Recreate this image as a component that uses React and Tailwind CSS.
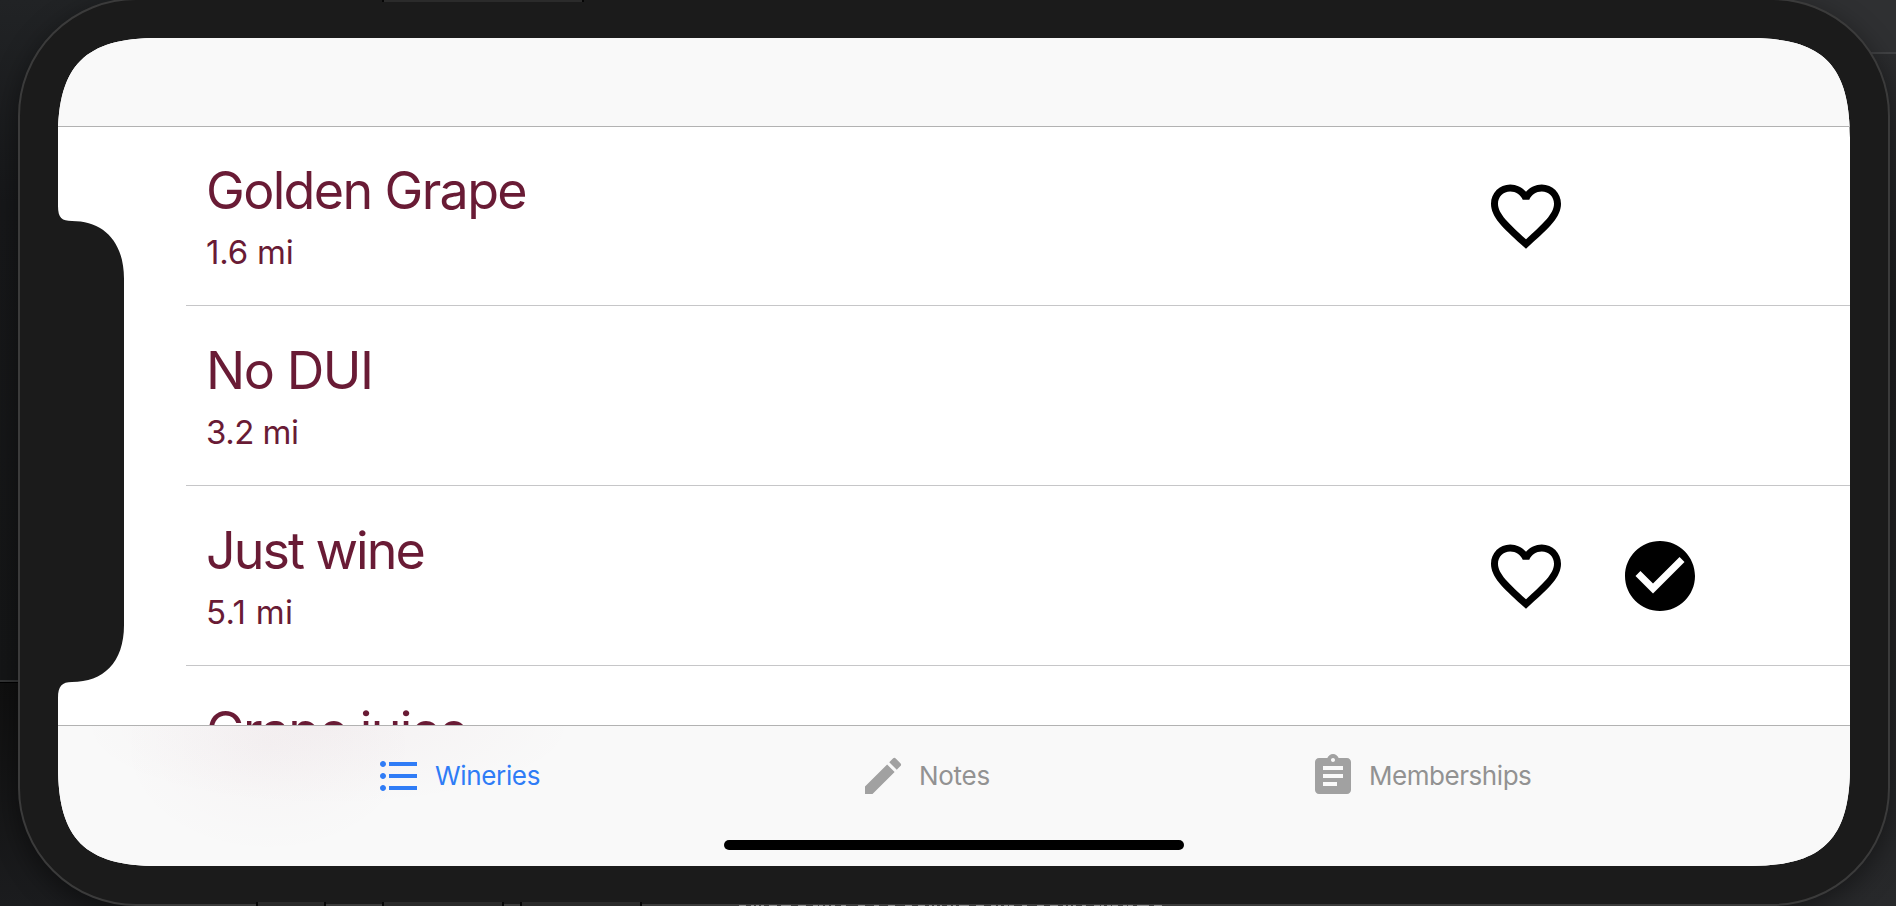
import { MdFormatListBulleted, MdEdit, MdAssignment, MdFavoriteBorder, MdCheckCircle } from "react-icons/md";

const rows = [
  { name: "Golden Grape", miles: "1.6 mi", liked: true, visited: false, nameTracking: "tracking-[-1.65px]", milesTracking: "tracking-[-0.2px]" },
  { name: "No DUI", miles: "3.2 mi", liked: false, visited: false, nameTracking: "tracking-[-1.45px]", milesTracking: "tracking-[-0.5px]" },
  { name: "Just wine", miles: "5.1 mi", liked: true, visited: true, nameTracking: "tracking-[-2px]", milesTracking: "tracking-[0.3px]" },
  { name: "Grape juice", liked: false, visited: false, nameTracking: "tracking-[-1.75px]", milesTracking: "" },
];

function WineryRow({ row }) {
  return (
    <div className="ml-32 flex h-[180px] shrink-0 justify-between border-b border-[#c6c6c8] pr-[148px] pl-5">
      <div className="flex flex-col pt-[33px] text-[#691b35]">
        <span className={`text-[52px] leading-[64px] whitespace-nowrap ${row.nameTracking}`}>{row.name}</span>
        {row.miles && (
          <span className={`mt-[9px] text-[33px] leading-[40px] whitespace-nowrap ${row.milesTracking}`}>{row.miles}</span>
        )}
      </div>
      <div className="flex items-center gap-[50px] text-[84px] text-black">
        {row.liked && <MdFavoriteBorder />}
        {row.visited ? <MdCheckCircle /> : <span className="w-[84px]" />}
      </div>
    </div>
  );
}

function Tab({ icon: Icon, label, className, iconClass, textClass }) {
  return (
    <div className={`flex items-center gap-3 ${className}`}>
      <Icon className={`size-12 ${iconClass}`} />
      <span className={`text-[26px] leading-8 ${textClass}`}>{label}</span>
    </div>
  );
}

/* Windows behind the phone: hairlines and the edges that peek past the bezel. */
function Backdrop() {
  return (
    <>
      <div className="absolute top-0 left-0 h-[682px] w-40 border-b-2 border-[#333435] bg-linear-to-b from-[#212325] via-[#17181a] via-30% to-[#151617]" />
      <div className="absolute top-[682px] left-0 h-[224px] w-40 border-t border-black bg-linear-to-b from-[#101010] to-[#1b1c1e]" />
      <div className="absolute top-0 right-0 h-[54px] w-40 border-b-2 border-[#414244] bg-[#2f3032]" />
      <div className="absolute top-[54px] right-0 h-[852px] w-40 bg-linear-to-b from-[#2b2c2e] via-[#1d1e20] via-30% to-[#28292b]" />
    </>
  );
}

function EdgeMarks() {
  return (
    <svg className="absolute inset-0" width="1896" height="906" shapeRendering="crispEdges">
      <path fill="#2b2b2b" d="M382 0h202v2h-202zM256 902h70v4h-70zM382 902h122v4h-122zM520 902h122v4h-122z" />
      <path fill="#060606" d="M382 0h2v2h-2zM582 0h2v2h-2zM256 902h2v4h-2zM324 902h2v4h-2zM382 902h2v4h-2zM502 902h2v4h-2zM520 902h2v4h-2zM640 902h2v4h-2z" />
      <path stroke="#8e8e8e" strokeWidth="1" d="M739 905.5h7m5 0h3m2 0h3m2 0h3m5 0h8m4 0h10m7 0h8m7 0h5m1 0h4m2 0h4m2 0h4m6 0h5m12 0h7m9 0h5m9 0h7m10 0h7m6 0h7m4 0h3m2 0h3m3 0h2m5 0h4m2 0h3m3 0h10m7 0h8m7 0h5m2 0h3m3 0h4m1 0h5m8 0h5m10 0h7m6 0h8m5 0h3m2 0h3m2 0h3m6 0h4m8 0h6m1 0h3m3 0h4m1 0h6m5 0h4m1 0h5m4 0h12m5 0h8" />
    </svg>
  );
}

export default function App() {
  return (
    <div className="relative h-[906px] w-[1896px] overflow-hidden bg-[#202123] font-['Inter',sans-serif]">
      <Backdrop />
      <div className="absolute top-[-2px] left-[18px] h-[908px] w-[1872px] rounded-[118px] border-2 border-[#3b3b3b] bg-[#1b1b1b] shadow-[0_8px_28px_rgba(0,0,0,0.45)]" />
      <EdgeMarks />
      <div className="relative mt-[38px] ml-[58px] flex h-[828px] w-[1792px] flex-col overflow-hidden bg-white [clip-path:path('M100_0H1692C1765_0_1792_27_1792_100V728C1792_801_1765_828_1692_828H100C27_828_0_801_0_728V660C0_648_4_644_14_644C45_644_66_625_66_587V241C66_203_45_183_14_183C4_183_0_180_0_168V100C0_27_27_0_100_0Z')]">
        <header className="h-[89px] shrink-0 border-b border-[#b2b2b2] bg-[#f9f9f9]" />
        <main className="-mt-px flex h-[599px] shrink-0 flex-col overflow-hidden">
          {rows.map((r) => <WineryRow key={r.name} row={r} />)}
        </main>
        <footer className="flex h-[141px] shrink-0 flex-col items-center border-t border-[#b2b2b2] bg-[#f9f9f9] bg-[radial-gradient(ellipse_250px_80px_at_270px_0px,rgba(120,30,60,0.035),transparent),radial-gradient(ellipse_150px_110px_at_210px_20px,rgba(120,30,60,0.025),transparent)]">
          <nav className="flex h-[100px] w-full pl-[317px] text-[#929292]">
            <Tab icon={MdFormatListBulleted} label="Wineries" className="w-[484px] text-[#2f7cf6]" iconClass="" textClass="tracking-[-0.35px]" />
            <Tab icon={MdEdit} label="Notes" className="w-[450px]" iconClass="text-[#a1a1a1]" textClass="tracking-[-0.3px]" />
            <Tab icon={MdAssignment} label="Memberships" className="" iconClass="text-[#a1a1a1]" textClass="tracking-[-0.45px]" />
          </nav>
          <div className="mt-[14px] h-[10px] w-[460px] rounded-full bg-black" />
        </footer>
      </div>
    </div>
  );
}
